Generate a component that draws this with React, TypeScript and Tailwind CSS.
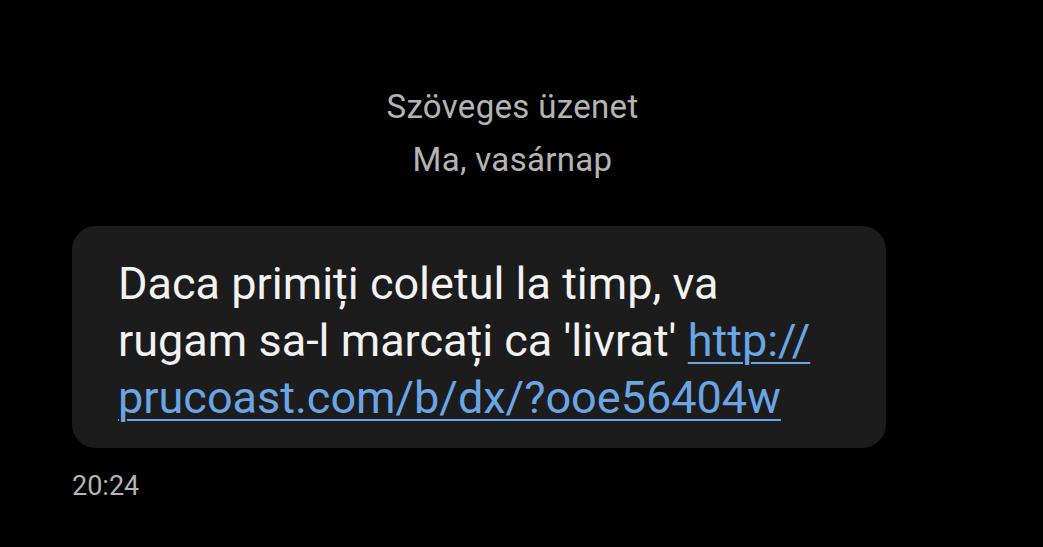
export default function App() {
    return (
        <div className="h-[547px] w-[1043px] overflow-hidden bg-black" style={{ fontFamily: 'Roboto, "Noto Sans", sans-serif' }}>
            {/* Header */}
            <div className="flex flex-col items-center pr-[18px] pt-[80px] text-[33px] leading-[53px] tracking-[0.01em] text-[#b4b4b4]">
                <div>Szöveges üzenet</div>
                <div>Ma, vasárnap</div>
            </div>

            {/* Message bubble */}
            <div className="ml-[72px] mt-[40px] w-[814px] rounded-[24px] bg-[#1c1c1c] pb-[22px] pl-[46px] pr-[20px] pt-[29px]">
                <p className="whitespace-nowrap text-[45px] leading-[57px] text-[#f2f2f2]">
                    Daca primiți coletul la timp, va
                    <br />
                    rugam sa-l marcați ca 'livrat'{' '}
                    <a className="text-[#6aa6e6] underline decoration-[2px] underline-offset-[6px]">
                        http://
                        <br />
                        prucoast.com/b/dx/?ooe56404w
                    </a>
                </p>
            </div>

            <div className="ml-[72px] mt-[22px] text-[27px] leading-[32px] text-[#b4b4b4]">20:24</div>
        </div>
    );
}
